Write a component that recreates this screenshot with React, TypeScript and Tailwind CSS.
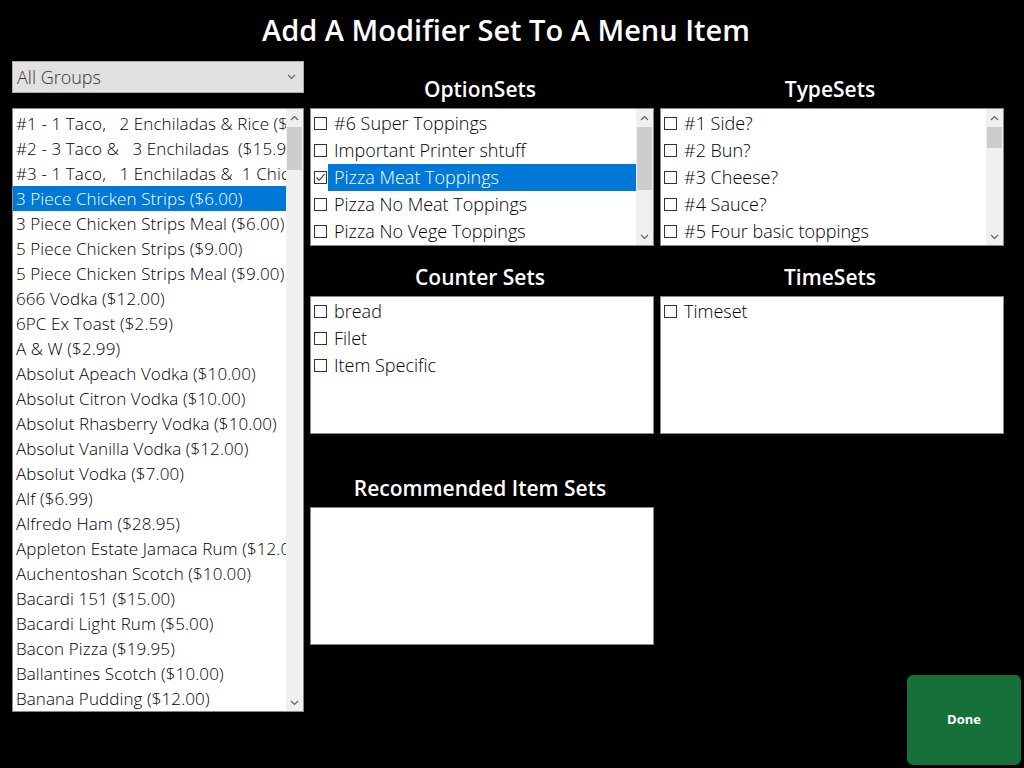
import React from 'react';

const menuItems = [
  '#1 - 1 Taco,   2 Enchiladas & Rice ($14.99)',
  '#2 - 3 Taco &   3 Enchiladas  ($15.99)',
  '#3 - 1 Taco,   1 Enchiladas &  1 Chicken ($12.99)',
  '3 Piece Chicken Strips ($6.00)',
  '3 Piece Chicken Strips Meal ($6.00)',
  '5 Piece Chicken Strips ($9.00)',
  '5 Piece Chicken Strips Meal ($9.00)',
  '666 Vodka ($12.00)',
  '6PC Ex Toast ($2.59)',
  'A & W ($2.99)',
  'Absolut Apeach Vodka ($10.00)',
  'Absolut Citron Vodka ($10.00)',
  'Absolut Rhasberry Vodka ($10.00)',
  'Absolut Vanilla Vodka ($12.00)',
  'Absolut Vodka ($7.00)',
  'Alf ($6.99)',
  'Alfredo Ham ($28.95)',
  'Appleton Estate Jamaca Rum ($12.00)',
  'Auchentoshan Scotch ($10.00)',
  'Bacardi 151 ($15.00)',
  'Bacardi Light Rum ($5.00)',
  'Bacon Pizza ($19.95)',
  'Ballantines Scotch ($10.00)',
  'Banana Pudding ($12.00)',
];

const optionSets = [
  { label: '#6 Super Toppings', checked: false },
  { label: 'Important Printer shtuff', checked: false },
  { label: 'Pizza Meat Toppings', checked: true, selected: true },
  { label: 'Pizza No Meat Toppings', checked: false },
  { label: 'Pizza No Vege Toppings', checked: false },
];

const typeSets = [
  { label: '#1 Side?' },
  { label: '#2 Bun?' },
  { label: '#3 Cheese?' },
  { label: '#4 Sauce?' },
  { label: '#5 Four basic toppings' },
];

const counterSets = [{ label: 'bread' }, { label: 'Filet' }, { label: 'Item Specific' }];
const timeSets = [{ label: 'Timeset' }];

function Chevron({ up }: { up?: boolean }) {
  return (
    <svg width="9" height="6" viewBox="0 0 9 6" fill="none" stroke="#606060" strokeWidth={1.2}>
      <path d={up ? 'M1 5 L4.5 1.5 L8 5' : 'M1 1 L4.5 4.5 L8 1'} />
    </svg>
  );
}

function ScrollBar({ thumbTop, thumbHeight }: { thumbTop: number; thumbHeight: number }) {
  return (
    <div className="relative w-[17px] h-full bg-[#f0f0f0] shrink-0">
      <div className="h-[17px] flex items-center justify-center">
        <Chevron up />
      </div>
      <div
        className="absolute left-[1px] right-[1px] bg-[#cdcdcd]"
        style={{ top: thumbTop, height: thumbHeight }}
      />
      <div className="absolute bottom-0 left-0 right-0 h-[17px] flex items-center justify-center">
        <Chevron />
      </div>
    </div>
  );
}

function CheckBox({ checked }: { checked?: boolean }) {
  return (
    <div className="w-[13px] h-[13px] border border-[#333333] bg-white shrink-0 flex items-center justify-center">
      {checked && (
        <svg width="11" height="11" viewBox="0 0 11 11" fill="none" stroke="#333333" strokeWidth={1.1}>
          <path d="M1.5 5.5 L4.2 8.3 L9.5 2.2" />
        </svg>
      )}
    </div>
  );
}

type Row = { label: string; checked?: boolean; selected?: boolean };

function CheckList({ rows, scroll }: { rows: Row[]; scroll?: { top: number; height: number } }) {
  return (
    <div className="h-[138px] bg-white border border-[#828790] flex text-[18px]">
      <div className="flex-1 pt-[1px] overflow-hidden">
        {rows.map((r) => (
          <div key={r.label} className="h-[27px] flex items-center pl-[3px]">
            <CheckBox checked={r.checked} />
            <div
              className={`ml-[1px] flex-1 h-full flex items-center pl-[6px] whitespace-nowrap ${
                r.selected ? 'bg-[#0078d7] text-white' : 'text-black'
              }`}
            >
              {r.label}
            </div>
          </div>
        ))}
      </div>
      {scroll && <ScrollBar thumbTop={scroll.top} thumbHeight={scroll.height} />}
    </div>
  );
}

function Header({ title, h }: { title: string; h: string }) {
  return (
    <div className={`${h} flex items-end justify-center pb-[6px] pr-[4px]`}>
      <span className="text-[21px] leading-[26px] font-semibold text-white">{title}</span>
    </div>
  );
}

export default function App() {
  return (
    <div
      className="w-[1024px] h-[768px] bg-black relative overflow-hidden font-light text-[17px]"
      style={{ fontFamily: '"Open Sans", "Noto Sans", sans-serif' }}
    >
      <div className="h-[61px] flex items-center justify-center pb-[1px] pr-[12px]">
        <h1 className="text-[29px] font-semibold text-white">Add A Modifier Set To A Menu Item</h1>
      </div>

      <div className="flex pl-[12px] gap-[6px]">
        <div className="w-[292px]">
          <div className="h-[32px] bg-[#e1e1e1] border border-[#adadad] flex items-center justify-between pl-[4px] pr-[7px] text-[#333]">
            <span className="text-[18px]">All Groups</span>
            <Chevron />
          </div>
          <div className="mt-[15px] h-[604px] bg-white border border-[#828790] flex">
            <div className="flex-1 pt-[2px] overflow-hidden">
              {menuItems.map((item, i) => (
                <div
                  key={item}
                  className={`h-[25px] flex items-center pl-[3px] whitespace-pre overflow-hidden tracking-[0.1px] ${
                    i === 3 ? 'bg-[#0078d7] text-white' : 'text-black'
                  }`}
                >
                  {item}
                </div>
              ))}
            </div>
            <ScrollBar thumbTop={18} thumbHeight={43} />
          </div>
        </div>

        <div className="w-[344px]">
          <Header title="OptionSets" h="h-[47px]" />
          <CheckList rows={optionSets} scroll={{ top: 18, height: 63 }} />
          <Header title="Counter Sets" h="h-[50px]" />
          <CheckList rows={counterSets} />
          <Header title="Recommended Item Sets" h="h-[73px]" />
          <div className="h-[138px] bg-white border border-[#828790]" />
        </div>

        <div className="w-[344px]">
          <Header title="TypeSets" h="h-[47px]" />
          <CheckList rows={typeSets} scroll={{ top: 18, height: 21 }} />
          <Header title="TimeSets" h="h-[50px]" />
          <CheckList rows={timeSets} />
        </div>
      </div>

      <button className="absolute left-[907px] top-[675px] w-[114px] h-[90px] rounded-[6px] bg-[#167039] text-white text-[13px] font-bold">
        Done
      </button>
    </div>
  );
}
